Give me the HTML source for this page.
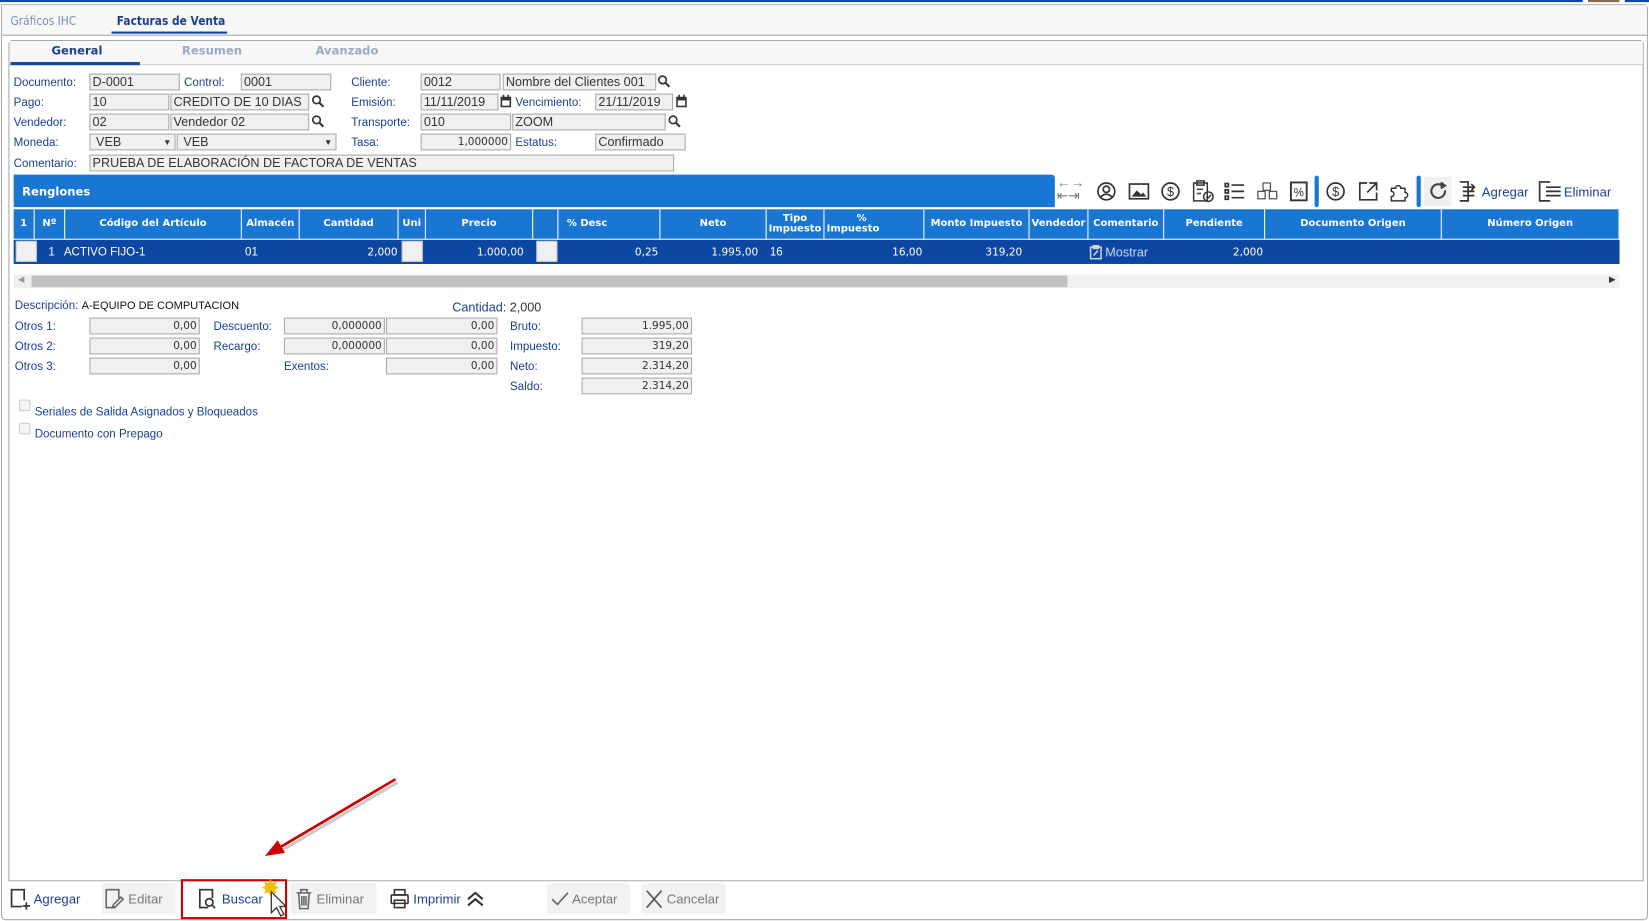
<!DOCTYPE html>
<html><head><meta charset="utf-8"><style>
*{box-sizing:border-box;margin:0;padding:0}
body{width:1649px;height:921px;overflow:hidden;background:#fff;font-family:"Liberation Sans",sans-serif}
#w{position:absolute;left:0;top:0;width:1568px;height:876px;transform:scale(1.05166);transform-origin:0 0}
.a{position:absolute;white-space:nowrap}
.l{position:absolute;font-size:11px;color:#1c3f8c;white-space:nowrap;margin-top:2px}
.i{position:absolute;height:16px;background:#f0f0f0;border:1px solid #a9a9a9;font-size:12px;color:#333;padding:0 2px;line-height:15px;white-space:nowrap;overflow:hidden}
.r{text-align:right;font-size:10px;font-family:"DejaVu Sans",sans-serif}
.h{position:absolute;top:199px;height:28px;color:#fff;font:bold 9.5px "DejaVu Sans",sans-serif;text-align:center;border-right:1px solid #fff;display:flex;align-items:center;justify-content:center;line-height:10px}
.d{position:absolute;top:229px;height:23px;line-height:23px;color:#fff;font-size:10px;font-family:"DejaVu Sans",sans-serif}
.tb{position:absolute;top:840px;height:30px;font-size:12.5px;display:flex;align-items:center;gap:3px}
svg{display:block}
</style></head><body><div id="w">
<div class="a" style="left:0;top:0;width:1505px;height:2px;background:#0d47a1"></div>
<div class="a" style="left:1510px;top:0;width:30px;height:2px;background:#8a6a50"></div>
<div class="a" style="left:1545px;top:0;width:23px;height:2px;background:#0d47a1"></div>
<div class="a" style="left:1px;top:4px;width:1566px;height:871px;border:1px solid #a8a8a8;border-radius:0 4px 4px 4px;background:#fff"></div>
<div class="a" style="left:2px;top:5px;width:1564px;height:29px;background:#f7f7f7;border-bottom:1px solid #a8a8a8"></div>
<div class="a" style="left:10px;top:13px;font:11.5px 'DejaVu Sans',sans-serif;color:#7a8fb3;transform:scaleX(.88);transform-origin:0 0">Gráficos IHC</div>
<div class="a" style="left:111px;top:13px;font:bold 11.5px 'DejaVu Sans',sans-serif;color:#1c3f8c;transform:scaleX(.88);transform-origin:0 0">Facturas de Venta</div>
<div class="a" style="left:106px;top:30px;width:110px;height:2px;background:#0d47a1"></div>
<div class="a" style="left:8px;top:38px;width:1555px;height:800px;border:1px solid #a8a8a8;border-radius:4px 4px 0 0"></div>
<div class="a" style="left:9px;top:39px;width:1553px;height:23px;background:#f7f7f7;border-bottom:1px solid #ccc"></div>
<div class="a" style="left:49px;top:42px;font:bold 11px 'DejaVu Sans',sans-serif;color:#1c3f8c">General</div>
<div class="a" style="left:173px;top:42px;font:bold 11px 'DejaVu Sans',sans-serif;color:#9aa8c8">Resumen</div>
<div class="a" style="left:300px;top:42px;font:bold 11px 'DejaVu Sans',sans-serif;color:#9aa8c8">Avanzado</div>
<div class="a" style="left:10px;top:59px;width:123px;height:3px;background:#0d47a1"></div>

<div class="l" style="left:13px;top:71px">Documento:</div><div class="i" style="left:85px;top:70px;width:86px">D-0001</div>
<div class="l" style="left:175px;top:71px">Control:</div><div class="i" style="left:229px;top:70px;width:86px">0001</div>
<div class="l" style="left:334px;top:71px">Cliente:</div><div class="i" style="left:400px;top:70px;width:76px">0012</div><div class="i" style="left:478px;top:70px;width:146px">Nombre del Clientes 001</div>
<div class="l" style="left:13px;top:90px">Pago:</div><div class="i" style="left:85px;top:89px;width:76px">10</div><div class="i" style="left:162px;top:89px;width:132px">CREDITO DE 10 DIAS</div>
<div class="l" style="left:334px;top:90px">Emisión:</div><div class="i" style="left:400px;top:89px;width:74px">11/11/2019</div>
<div class="l" style="left:490px;top:90px">Vencimiento:</div><div class="i" style="left:566px;top:89px;width:74px">21/11/2019</div>
<div class="l" style="left:13px;top:109px">Vendedor:</div><div class="i" style="left:85px;top:108px;width:76px">02</div><div class="i" style="left:162px;top:108px;width:132px">Vendedor 02</div>
<div class="l" style="left:334px;top:109px">Transporte:</div><div class="i" style="left:400px;top:108px;width:86px">010</div><div class="i" style="left:487px;top:108px;width:146px">ZOOM</div>
<div class="l" style="left:13px;top:128px">Moneda:</div><div class="i" style="left:85px;top:127px;width:82px">&nbsp;VEB<span style="position:absolute;right:3px;font-size:8px">▼</span></div><div class="i" style="left:168px;top:127px;width:152px">&nbsp;VEB<span style="position:absolute;right:3px;font-size:8px">▼</span></div>
<div class="l" style="left:334px;top:128px">Tasa:</div><div class="i r" style="left:400px;top:127px;width:86px">1,000000</div>
<div class="l" style="left:490px;top:128px">Estatus:</div><div class="i" style="left:566px;top:127px;width:86px">Confirmado</div>
<div class="l" style="left:13px;top:148px">Comentario:</div><div class="i" style="left:85px;top:147px;width:556px">PRUEBA DE ELABORACIÓN DE FACTORA DE VENTAS</div>
<svg class="a" style="left:625px;top:71px" width="13" height="13"><circle cx="5" cy="5" r="3.6" fill="none" stroke="#333" stroke-width="1.6"/><path d="M7.6 7.6L11.5 11.5" stroke="#333" stroke-width="2"/></svg>
<svg class="a" style="left:296px;top:90px" width="13" height="13"><circle cx="5" cy="5" r="3.6" fill="none" stroke="#333" stroke-width="1.6"/><path d="M7.6 7.6L11.5 11.5" stroke="#333" stroke-width="2"/></svg>
<svg class="a" style="left:296px;top:109px" width="13" height="13"><circle cx="5" cy="5" r="3.6" fill="none" stroke="#333" stroke-width="1.6"/><path d="M7.6 7.6L11.5 11.5" stroke="#333" stroke-width="2"/></svg>
<svg class="a" style="left:635px;top:109px" width="13" height="13"><circle cx="5" cy="5" r="3.6" fill="none" stroke="#333" stroke-width="1.6"/><path d="M7.6 7.6L11.5 11.5" stroke="#333" stroke-width="2"/></svg>
<svg class="a" style="left:475px;top:90px" width="12" height="13"><rect x="1" y="2" width="10" height="10" fill="#333"/><rect x="2.5" y="5.5" width="7" height="5" fill="#fff"/><rect x="3" y="0" width="1.5" height="3" fill="#333"/><rect x="7.5" y="0" width="1.5" height="3" fill="#333"/></svg>
<svg class="a" style="left:642px;top:90px" width="12" height="13"><rect x="1" y="2" width="10" height="10" fill="#333"/><rect x="2.5" y="5.5" width="7" height="5" fill="#fff"/><rect x="3" y="0" width="1.5" height="3" fill="#333"/><rect x="7.5" y="0" width="1.5" height="3" fill="#333"/></svg>

<div class="a" style="left:13px;top:166px;width:990px;height:31px;background:#1976d2;border-radius:0 3px 0 0"></div>
<div class="a" style="left:21px;top:176px;font:bold 11px 'DejaVu Sans',sans-serif;color:#fff">Renglones</div>
<div class="a" style="left:1005px;top:168px;font-size:13px;color:#777;line-height:12px">←→<br>⇤⇥</div>
<svg class="a" style="left:1042px;top:172px" width="20" height="20" fill="none" stroke="#333" stroke-width="1.6"><circle cx="10" cy="10" r="8"/><circle cx="10" cy="8" r="3"/><path d="M4.5 15.5Q10 10 15.5 15.5"/></svg>
<svg class="a" style="left:1073px;top:173px" width="20" height="18"><rect x="1" y="2" width="18" height="14" fill="none" stroke="#333" stroke-width="1.6"/><path d="M3 14L8 8L12 12L14 10L17 14Z" fill="#333"/></svg>
<svg class="a" style="left:1103px;top:172px" width="20" height="20" fill="none" stroke="#333" stroke-width="1.6"><circle cx="10" cy="10" r="8"/><text x="10" y="14.5" font-size="12" text-anchor="middle" fill="#333" stroke="none" font-family="Liberation Sans">$</text></svg>
<svg class="a" style="left:1133px;top:171px" width="22" height="22" fill="none" stroke="#333" stroke-width="1.4"><rect x="2" y="3" width="13" height="17"/><rect x="5" y="1" width="7" height="4"/><path d="M5 9h6M5 13h4"/><circle cx="16" cy="16" r="4.5"/><path d="M14 16l1.5 1.5 3-3"/></svg>
<svg class="a" style="left:1164px;top:173px" width="20" height="18" fill="none" stroke="#333" stroke-width="1.6"><rect x="1" y="1.5" width="3" height="3"/><rect x="1" y="7.5" width="3" height="3"/><rect x="1" y="13.5" width="3" height="3"/><path d="M7 3h12M7 9h12M7 15h12"/></svg>
<svg class="a" style="left:1194px;top:172px" width="22" height="20" fill="none" stroke="#555" stroke-width="1.2"><rect x="7" y="2" width="7" height="7"/><rect x="2" y="10" width="7" height="7"/><rect x="13" y="10" width="7" height="7"/></svg>
<svg class="a" style="left:1226px;top:172px" width="18" height="20"><rect x="1.5" y="1.5" width="15" height="17" fill="none" stroke="#333" stroke-width="1.8"/><text x="9" y="15" font-size="11" text-anchor="middle" fill="#333" font-family="Liberation Sans">%</text></svg>
<div class="a" style="left:1250px;top:167px;width:4px;height:30px;background:#1976d2;border-radius:2px"></div>
<svg class="a" style="left:1260px;top:172px" width="20" height="20" fill="none" stroke="#333" stroke-width="1.6"><circle cx="10" cy="10" r="8"/><text x="10" y="14.5" font-size="12" text-anchor="middle" fill="#333" stroke="none" font-family="Liberation Sans">$</text></svg>
<svg class="a" style="left:1291px;top:172px" width="20" height="20" fill="none" stroke="#333" stroke-width="1.6"><path d="M9 2H2v16h16v-7M11 2h7v7M18 2L9 11"/></svg>
<svg class="a" style="left:1321px;top:172px" width="20" height="20" fill="none" stroke="#333" stroke-width="1.4"><path d="M2 7h4a2.5 2.5 0 1 1 5 0h4v4a2.5 2.5 0 1 1 0 5v3H2v-4a2.5 2.5 0 1 0 0-5z"/></svg>
<div class="a" style="left:1347px;top:167px;width:4px;height:30px;background:#1976d2;border-radius:2px"></div>
<div class="a" style="left:1354px;top:168px;width:26px;height:28px;background:#f0f0f0"></div>
<svg class="a" style="left:1358px;top:172px" width="20" height="20" fill="none" stroke="#444" stroke-width="2"><path d="M16 9A6.5 6.5 0 1 1 13 4.2"/><path d="M12 1.5l4 3-4 2.5" fill="#444"/></svg>
<svg class="a" style="left:1385px;top:171px" width="20" height="22" fill="none" stroke="#333" stroke-width="1.6"><path d="M3 2h8v18H3"/><path d="M6 7h11M6 11h11M6 15h11M14 4l3 3-3 3"/></svg>
<div class="a" style="left:1409px;top:176px;font-size:12.5px;color:#1c3f8c">Agregar</div>
<svg class="a" style="left:1462px;top:171px" width="24" height="22" fill="none" stroke="#333" stroke-width="1.6"><path d="M12 2H2v18h10"/><path d="M8 7h14M8 11h14M8 15h14"/></svg>
<div class="a" style="left:1487px;top:176px;font-size:12.5px;color:#1c3f8c">Eliminar</div>

<div class="a" style="left:13px;top:199px;width:1527px;height:28px;background:#1976d2"></div>
<div class="h" style="left:13px;width:20px">1</div>
<div class="h" style="left:33px;width:29px">Nº</div>
<div class="h" style="left:62px;width:168px">Código del Artículo</div>
<div class="h" style="left:230px;width:55px">Almacén</div>
<div class="h" style="left:285px;width:94px">Cantidad</div>
<div class="h" style="left:379px;width:26px">Uni</div>
<div class="h" style="left:405px;width:102px">Precio</div>
<div class="h" style="left:507px;width:24px"></div>
<div class="h" style="left:531px;width:97px;justify-content:flex-start;padding-left:8px">% Desc</div>
<div class="h" style="left:628px;width:101px">Neto</div>
<div class="h" style="left:729px;width:55px">Tipo<br>Impuesto</div>
<div class="h" style="left:784px;width:95px;justify-content:flex-start;padding-left:2px">&nbsp;&nbsp;&nbsp;&nbsp;&nbsp;%<br>Impuesto</div>
<div class="h" style="left:879px;width:100px">Monto Impuesto</div>
<div class="h" style="left:979px;width:56px;overflow:hidden">Vendedor</div>
<div class="h" style="left:1035px;width:72px">Comentario</div>
<div class="h" style="left:1107px;width:96px">Pendiente</div>
<div class="h" style="left:1203px;width:168px">Documento Origen</div>
<div class="h" style="left:1371px;width:169px">Número Origen</div>
<div class="a" style="left:13px;top:228px;width:1527px;height:23px;background:#0d47a1"></div>
<div class="a" style="left:15px;top:229px;width:20px;height:20px;background:#f0f0f0;border:1px solid #ccc"></div>
<div class="a" style="left:382px;top:229px;width:20px;height:20px;background:#f0f0f0;border:1px solid #ccc"></div>
<div class="a" style="left:510px;top:229px;width:20px;height:20px;background:#f0f0f0;border:1px solid #ccc"></div>
<div class="d" style="left:46px;font-size:11px;font-family:'Liberation Sans'">1&nbsp;&nbsp; ACTIVO FIJO-1</div>
<div class="d" style="left:233px;font-size:11px;font-family:'Liberation Sans'">01</div>
<div class="d" style="left:285px;width:93px;text-align:right">2,000</div>
<div class="d" style="left:405px;width:93px;text-align:right">1.000,00</div>
<div class="d" style="left:531px;width:95px;text-align:right">0,25</div>
<div class="d" style="left:628px;width:93px;text-align:right">1.995,00</div>
<div class="d" style="left:732px;font-size:11px;font-family:'Liberation Sans'">16</div>
<div class="d" style="left:784px;width:93px;text-align:right">16,00</div>
<div class="d" style="left:879px;width:93px;text-align:right">319,20</div>
<svg class="a" style="left:1036px;top:233px" width="12" height="14" fill="none" stroke="#cfd8e8" stroke-width="1.4"><rect x="1" y="2" width="10" height="11"/><rect x="3.5" y="0.7" width="5" height="2.5"/><path d="M4 10l4-5"/></svg>
<div class="d" style="left:1051px;font-size:12px;font-family:'Liberation Sans';color:#cfd8e8">Mostrar</div>
<div class="d" style="left:1107px;width:94px;text-align:right">2,000</div>

<div class="a" style="left:13px;top:261px;width:1527px;height:13px;background:#f0f0f0"></div>
<div class="a" style="left:30px;top:262px;width:985px;height:11px;background:#c1c1c1"></div>
<div class="a" style="left:17px;top:261px;font-size:8px;color:#999">◀</div>
<div class="a" style="left:1530px;top:261px;font-size:8px;color:#333">▶</div>

<div class="l" style="left:14px;top:283px">Descripción: <span style="color:#111;font-size:10.5px">A-EQUIPO DE COMPUTACION</span></div>
<div class="l" style="left:430px;top:283px;font-size:12px">Cantidad: <span style="color:#333">2,000</span></div>
<div class="l" style="left:14px;top:303px">Otros 1:</div><div class="i r" style="left:85px;top:302px;width:105px">0,00</div>
<div class="l" style="left:14px;top:322px">Otros 2:</div><div class="i r" style="left:85px;top:321px;width:105px">0,00</div>
<div class="l" style="left:14px;top:341px">Otros 3:</div><div class="i r" style="left:85px;top:340px;width:105px">0,00</div>
<div class="l" style="left:203px;top:303px">Descuento:</div><div class="i r" style="left:270px;top:302px;width:96px">0,000000</div><div class="i r" style="left:367px;top:302px;width:106px">0,00</div>
<div class="l" style="left:203px;top:322px">Recargo:</div><div class="i r" style="left:270px;top:321px;width:96px">0,000000</div><div class="i r" style="left:367px;top:321px;width:106px">0,00</div>
<div class="l" style="left:270px;top:341px">Exentos:</div><div class="i r" style="left:367px;top:340px;width:106px">0,00</div>
<div class="l" style="left:485px;top:303px">Bruto:</div><div class="i r" style="left:553px;top:302px;width:105px">1.995,00</div>
<div class="l" style="left:485px;top:322px">Impuesto:</div><div class="i r" style="left:553px;top:321px;width:105px">319,20</div>
<div class="l" style="left:485px;top:341px">Neto:</div><div class="i r" style="left:553px;top:340px;width:105px">2.314,20</div>
<div class="l" style="left:485px;top:360px">Saldo:</div><div class="i r" style="left:553px;top:359px;width:105px">2.314,20</div>
<div class="a" style="left:18px;top:380px;width:11px;height:11px;border:1px solid #ccc;border-radius:2px;background:#f4f4f4"></div>
<div class="l" style="left:33px;top:384px">Seriales de Salida Asignados y Bloqueados</div>
<div class="a" style="left:18px;top:402px;width:11px;height:11px;border:1px solid #ccc;border-radius:2px;background:#f4f4f4"></div>
<div class="l" style="left:33px;top:405px">Documento con Prepago</div>

<svg class="a" style="left:240px;top:735px" width="145" height="90"><path d="M136 6L22 73" stroke="#999" stroke-width="3" opacity=".5" transform="translate(2,3)"/><path d="M136 6L24 72" stroke="#c00" stroke-width="2.5"/><path d="M12 79L24 64L31 76Z" fill="#c00"/></svg>

<div class="tb" style="left:9px"><svg width="20" height="22" fill="none" stroke="#333" stroke-width="1.6"><path d="M12 18H2V2h12v10"/><path d="M16 14v7M12.5 17.5h7"/></svg><span style="color:#1c3f8c">Agregar</span></div>
<div class="a" style="left:97px;top:840px;width:70px;height:29px;background:#f2f2f2"></div>
<div class="tb" style="left:99px"><svg width="20" height="22" fill="none" stroke="#666" stroke-width="1.5"><path d="M11 19H2V2h12v8"/><path d="M8 19l1-3 7-7 2 2-7 7z"/></svg><span style="color:#777">Editar</span></div>
<div class="a" style="left:172px;top:836px;width:101px;height:38px;border:2px solid #c00"></div>
<div class="tb" style="left:188px"><svg width="20" height="22" fill="none" stroke="#333" stroke-width="1.6"><path d="M10 19H2V2h12v8"/><circle cx="11" cy="14" r="3.5"/><path d="M13.5 16.5l3 3"/></svg><span style="color:#1c3f8c">Buscar</span></div>
<div class="a" style="left:248px;top:834px;font-size:22px;color:#f6c000;line-height:22px">✸</div>
<svg class="a" style="left:256px;top:846px" width="18" height="28"><path d="M2 2v20l5-5 4 8 3-1.5-4-7.5h6z" fill="#fff" stroke="#333" stroke-width="1.2"/></svg>
<div class="a" style="left:276px;top:840px;width:82px;height:29px;background:#f2f2f2"></div>
<div class="tb" style="left:280px"><svg width="18" height="22" fill="none" stroke="#666" stroke-width="1.5"><path d="M2 5h14M6 5V2h6v3M4 5l1 15h8l1-15M7 8v9M9 8v9M11 8v9"/></svg><span style="color:#777">Eliminar</span></div>
<div class="tb" style="left:370px"><svg width="20" height="22" fill="none" stroke="#333" stroke-width="1.5"><rect x="5" y="2" width="10" height="5"/><rect x="2" y="7" width="16" height="8" rx="1"/><rect x="5" y="12" width="10" height="7"/></svg><span style="color:#1c3f8c">Imprimir</span><svg width="22" height="22" fill="none" stroke="#333" stroke-width="2"><path d="M4 11l7-6 7 6M4 17l7-6 7 6"/></svg></div>
<div class="a" style="left:520px;top:840px;width:79px;height:29px;background:#f2f2f2"></div>
<div class="tb" style="left:523px"><svg width="18" height="22" fill="none" stroke="#666" stroke-width="1.6"><path d="M2 11l5 5 10-11"/></svg><span style="color:#777">Aceptar</span></div>
<div class="a" style="left:610px;top:840px;width:80px;height:29px;background:#f2f2f2"></div>
<div class="tb" style="left:613px"><svg width="18" height="22" fill="none" stroke="#555" stroke-width="1.6"><path d="M2 3l14 16M16 3L2 19"/></svg><span style="color:#777">Cancelar</span></div>
</div></body></html>
